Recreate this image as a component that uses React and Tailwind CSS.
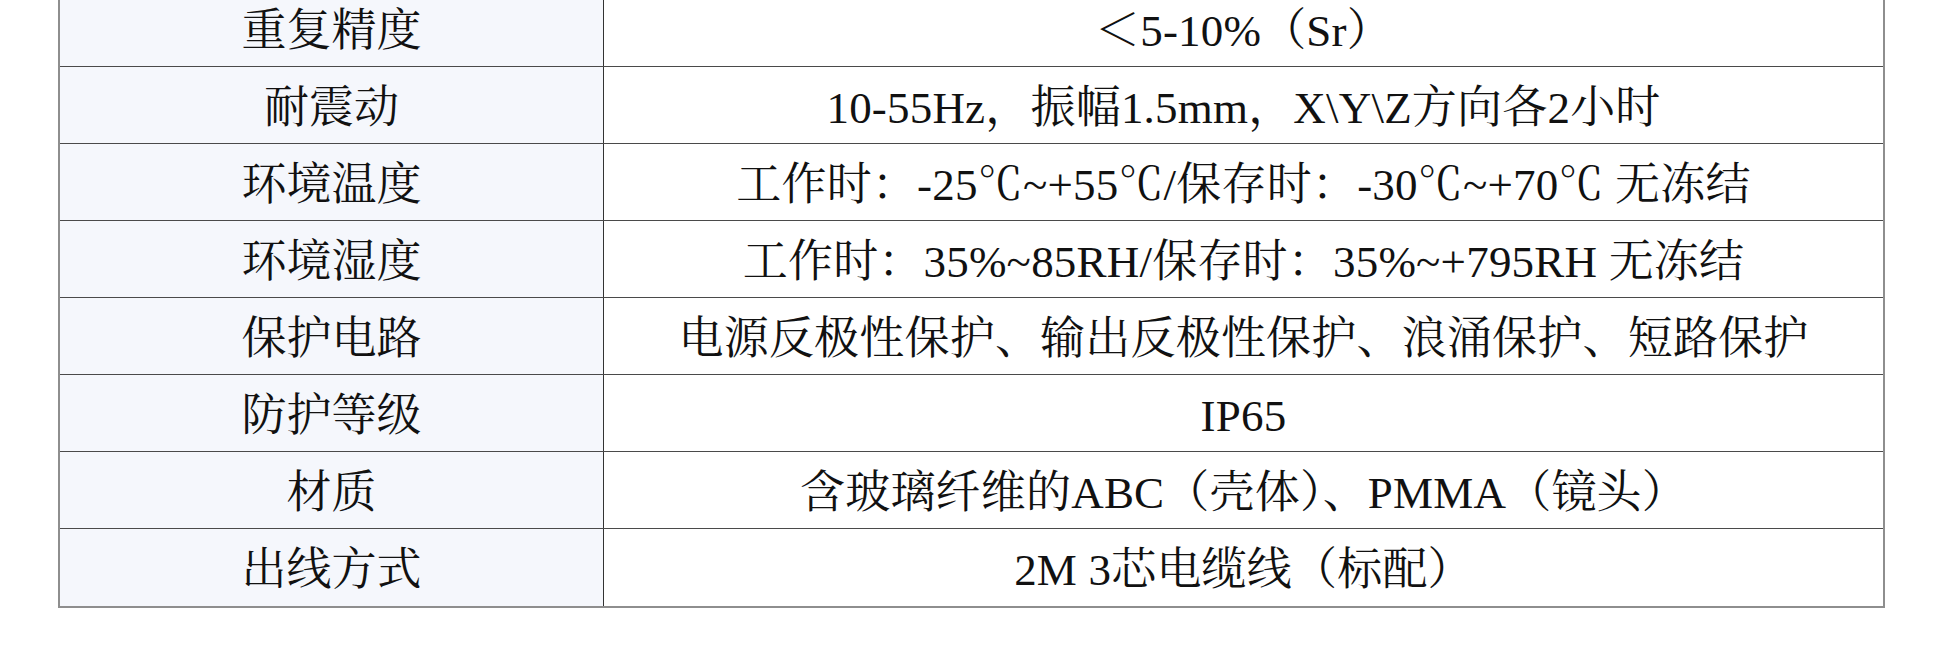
const rows = [
  { label: '重复精度', value: '＜5-10%（Sr）' },
  { label: '耐震动', value: '10-55Hz，振幅1.5mm，X\\Y\\Z方向各2小时' },
  { label: '环境温度', value: '工作时：-25℃~+55℃/保存时：-30℃~+70℃ 无冻结' },
  { label: '环境湿度', value: '工作时：35%~85RH/保存时：35%~+795RH 无冻结' },
  { label: '保护电路', value: '电源反极性保护、输出反极性保护、浪涌保护、短路保护' },
  { label: '防护等级', value: 'IP65' },
  { label: '材质', value: '含玻璃纤维的ABC（壳体）、PMMA（镜头）' },
  { label: '出线方式', value: '2M 3芯电缆线（标配）' },
];

export default function App() {
  return (
    <div
      className="h-[645px] w-[1942px] overflow-hidden bg-white text-[#111]"
      style={{ fontFamily: '"Liberation Serif", "Noto Serif CJK SC", "Noto Sans CJK SC", serif' }}
    >
      <div className="-mt-[10px] ml-[58px] w-[1827px] border-x-2 border-b-2 border-[#8e8e8e]">
        {rows.map((row, i) => (
          <div
            key={i}
            className={`flex h-[77px] ${i < rows.length - 1 ? 'border-b border-[#4a4a4a]' : ''}`}
          >
            <div className="flex w-[544px] shrink-0 items-center justify-center border-r border-[#333] bg-[#f5f7fc] pt-[6px] text-[45px] leading-none">
              {row.label}
            </div>
            <div className="flex flex-1 items-center justify-center whitespace-nowrap pt-[6px] text-[45px] leading-none tracking-[0.2px]">
              {row.value}
            </div>
          </div>
        ))}
      </div>
    </div>
  );
}
